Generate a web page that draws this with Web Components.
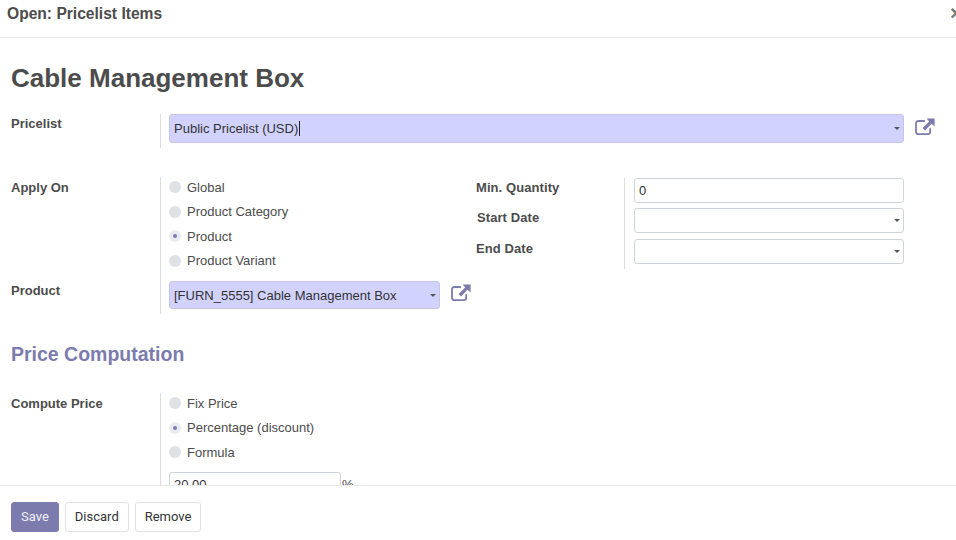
<!DOCTYPE html>
<html>
<head>
<meta charset="utf-8">
<title>Open: Pricelist Items</title>
<style>
  html, body { margin: 0; padding: 0; background: #fff; }
  body { font-family: "Liberation Sans", Arial, sans-serif; font-size: 13px; color: #4c4c4c; }
</style>
</head>
<body>
<pricelist-dialog>
  <span slot="title">Open: Pricelist Items</span>

  <h1-title>Cable Management Box</h1-title>

  <field-row label="Pricelist" gap>
    <field-select value="Public Pricelist (USD)" filled caret-cursor link></field-select>
  </field-row>

  <apply-on-group>
    <div slot="left">
      <field-row label="Apply On" group flush>
        <radio-list>
          <radio-item>Global</radio-item>
          <radio-item>Product Category</radio-item>
          <radio-item checked>Product</radio-item>
          <radio-item>Product Variant</radio-item>
        </radio-list>
      </field-row>
      <field-row label="Product">
        <field-select value="[FURN_5555] Cable Management Box" filled link narrow></field-select>
      </field-row>
    </div>
    <side-fields slot="right">
      <side-label>Min. Quantity</side-label><field-input value="0"></field-input>
      <side-label indent>Start Date</side-label><field-select></field-select>
      <side-label>End Date</side-label><field-select></field-select>
    </side-fields>
  </apply-on-group>

  <section-title>Price Computation</section-title>

  <field-row label="Compute Price" group flush>
    <radio-list>
      <radio-item>Fix Price</radio-item>
      <radio-item checked>Percentage (discount)</radio-item>
      <radio-item>Formula</radio-item>
    </radio-list>
    <percent-field value="20.00"></percent-field>
  </field-row>

  <dialog-button slot="footer" primary>Save</dialog-button>
  <dialog-button slot="footer">Discard</dialog-button>
  <dialog-button slot="footer">Remove</dialog-button>
</pricelist-dialog>

<script>
class PricelistDialog extends HTMLElement {
  constructor() {
    super();
    this.shadow = this.attachShadow({ mode: 'open' });
    this.shadow.innerHTML = `
      <style>
        :host { display: flex; flex-direction: column; height: 540px; overflow: hidden; }
        header {
          flex: none; height: 37px;
          border-bottom: 1px solid #e9e9e9;
          display: flex; justify-content: space-between;
          padding: 0 0 0 7px;
          font-size: 15.6px; font-weight: 700; color: #4c4c4c; line-height: 28px;
        }
        .close { font-size: 21px; line-height: 25px; color: #777; width: 6px; overflow: hidden; font-weight: 700; }
        main { flex: 1; min-height: 0; overflow: hidden; padding: 0 21px 0 11px; }
        footer {
          flex: none; box-sizing: border-box; height: 55px; border-top: 1px solid #e9e9e9;
          display: flex; align-items: flex-start; gap: 6px; padding: 16px 11px 0;
        }
      </style>
      <header><slot name="title"></slot><span class="close">×</span></header>
      <main><slot></slot></main>
      <footer><slot name="footer"></slot></footer>
    `;
  }
}

class H1Title extends HTMLElement {
  constructor() {
    super();
    this.attachShadow({ mode: 'open' }).innerHTML = `
      <style>
        :host { display: block; padding-top: 24px; height: 52px; font-size: 26px; font-weight: 700; line-height: 32px; color: #4c4c4c; }
      </style>
      <slot></slot>
    `;
  }
}

class SectionTitle extends HTMLElement {
  constructor() {
    super();
    this.attachShadow({ mode: 'open' }).innerHTML = `
      <style>
        :host { display: block; height: 79px; padding-top: 26px; box-sizing: border-box; font-size: 19.5px; font-weight: 700; line-height: 28px; color: #7c7bad; }
      </style>
      <slot></slot>
    `;
  }
}

class FieldRow extends HTMLElement {
  constructor() {
    super();
    const label = this.getAttribute('label');
    this.attachShadow({ mode: 'open' }).innerHTML = `
      <style>
        :host { display: grid; grid-template-columns: 149px 1fr; }
        :host([gap]) { margin-bottom: 29px; }
        label { font-weight: 700; line-height: 18px; padding-top: 1px; color: #4c4c4c; }
        :host([group]) label { padding-top: 2px; }
        .content { border-left: 1px solid #dcdcdc; padding: 0 0 5px 8px; min-width: 0; }
        :host([flush]) .content { padding-bottom: 0; }
      </style>
      <label>${label}</label>
      <div class="content"><slot></slot></div>
    `;
  }
}

class ApplyOnGroup extends HTMLElement {
  constructor() {
    super();
    this.attachShadow({ mode: 'open' }).innerHTML = `
      <style>
        :host { display: grid; grid-template-columns: 465px 1fr; padding-right: 31px; }
      </style>
      <slot name="left"></slot>
      <slot name="right"></slot>
    `;
  }
}

class SideFields extends HTMLElement {
  constructor() {
    super();
    this.attachShadow({ mode: 'open' }).innerHTML = `
      <style>
        :host { display: grid; grid-template-columns: 148px 1fr; grid-template-rows: 30px 31px 25px; align-items: start; align-self: start; position: relative; padding-bottom: 5px; margin-top: 1px; }
        .rule { position: absolute; left: 148px; top: 0; bottom: 0; border-left: 1px solid #dcdcdc; }
        ::slotted(field-input), ::slotted(field-select) { margin-left: 10px; }
      </style>
      <div class="rule"></div>
      <slot></slot>
    `;
  }
}

class SideLabel extends HTMLElement {
  constructor() {
    super();
    this.attachShadow({ mode: 'open' }).innerHTML = `
      <style>
        :host { display: block; font-weight: 700; line-height: 18px; padding-top: 1px; color: #4c4c4c; letter-spacing: 0.08px; }
        :host([indent]) { padding-left: 1px; }
      </style>
      <slot></slot>
    `;
  }
}

class RadioList extends HTMLElement {
  constructor() {
    super();
    this.attachShadow({ mode: 'open' }).innerHTML = `
      <style>
        :host { display: flex; flex-direction: column; gap: 6.5px; padding: 1px 0 11.5px; }
      </style>
      <slot></slot>
    `;
  }
}

class RadioItem extends HTMLElement {
  constructor() {
    super();
    this.attachShadow({ mode: 'open' }).innerHTML = `
      <style>
        :host { display: flex; align-items: center; gap: 6px; height: 18px; color: #4c4c4c; }
        .dot { width: 12px; height: 12px; border-radius: 50%; background: #dee2e6; display: flex; align-items: center; justify-content: center; }
        :host([checked]) .dot { background: #e9ecef; }
        :host([checked]) .dot::after { content: ""; width: 4px; height: 4px; border-radius: 50%; background: #7c7bad; }
      </style>
      <span class="dot"></span><slot></slot>
    `;
  }
}

class FieldSelect extends HTMLElement {
  constructor() {
    super();
    const value = this.getAttribute('value') || '';
    const caret = this.hasAttribute('caret-cursor') ? '<i class="cursor"></i>' : '';
    const link = this.hasAttribute('link')
      ? `<svg class="link" width="20" height="18" viewBox="0 0 20 18">
           <path d="M15.2 10.2v3.6a2.4 2.4 0 0 1-2.4 2.4H3.4A2.4 2.4 0 0 1 1 13.8V5.4A2.4 2.4 0 0 1 3.4 3h6.4" fill="none" stroke="#7c7bad" stroke-width="1.8"/>
           <path d="M11.6 0.6H19.6V8.6L16.6 5.8 10 12.4 7.6 10 14.2 3.4Z" fill="#7c7bad"/>
         </svg>` : '';
    this.attachShadow({ mode: 'open' }).innerHTML = `
      <style>
        :host { display: flex; align-items: center; gap: 11px; }
        :host([narrow]) .box { flex: none; width: 271px; }
        .box {
          flex: 1; min-width: 0; box-sizing: border-box; height: 25px; padding: 0 3px 0 4px;
          border: 1px solid #ced4da; border-radius: 3px; background: #fff;
          display: flex; align-items: center; justify-content: space-between; color: #333;
        }
        :host([filled]) .box { background: #d2d2ff; height: 29px; border-color: #c6c6e4; }
        :host([narrow]) .box { height: 28px; }
        .text { white-space: nowrap; }
        .cursor { display: inline-block; width: 1px; height: 15px; background: #222; vertical-align: -3px; margin-left: 1px; }
        .arrow { width: 0; height: 0; border: 3px solid transparent; border-top: 3px solid #555; border-bottom: 0; }
        .link { flex: none; margin-bottom: 4px; }
      </style>
      <div class="box"><span class="text">${value}${caret}</span><span class="arrow"></span></div>${link}
    `;
  }
}

class FieldInput extends HTMLElement {
  constructor() {
    super();
    const value = this.getAttribute('value') || '';
    this.attachShadow({ mode: 'open' }).innerHTML = `
      <style>
        :host { display: block; }
        .box { box-sizing: border-box; height: 25px; line-height: 23px; padding: 0 4px; border: 1px solid #ced4da; border-radius: 3px; color: #333; }
      </style>
      <div class="box">${value}</div>
    `;
  }
}

class PercentField extends HTMLElement {
  constructor() {
    super();
    const value = this.getAttribute('value') || '';
    this.attachShadow({ mode: 'open' }).innerHTML = `
      <style>
        :host { display: flex; align-items: flex-start; margin-top: -0.5px; }
        .box { box-sizing: border-box; width: 172px; height: 25px; line-height: 23px; padding: 0 4px; border: 1px solid #ced4da; border-radius: 3px; color: #333; }
        span { line-height: 25px; padding-left: 1px; }
      </style>
      <div class="box">${value}</div><span>%</span>
    `;
  }
}

class DialogButton extends HTMLElement {
  constructor() {
    super();
    this.attachShadow({ mode: 'open' }).innerHTML = `
      <style>
        :host { display: block; box-sizing: border-box; height: 30px; line-height: 28px; padding: 0 9px; border: 1px solid #dee2e6; border-radius: 3px; color: #333; background: #fff; font-family: Roboto, "Liberation Sans", sans-serif; }
        :host([primary]) { background: #7c7bad; border-color: #7c7bad; color: #f0f0f6; }
      </style>
      <slot></slot>
    `;
  }
}

customElements.define('pricelist-dialog', PricelistDialog);
customElements.define('h1-title', H1Title);
customElements.define('section-title', SectionTitle);
customElements.define('field-row', FieldRow);
customElements.define('apply-on-group', ApplyOnGroup);
customElements.define('side-fields', SideFields);
customElements.define('side-label', SideLabel);
customElements.define('radio-list', RadioList);
customElements.define('radio-item', RadioItem);
customElements.define('field-select', FieldSelect);
customElements.define('field-input', FieldInput);
customElements.define('percent-field', PercentField);
customElements.define('dialog-button', DialogButton);
</script>
</body>
</html>
